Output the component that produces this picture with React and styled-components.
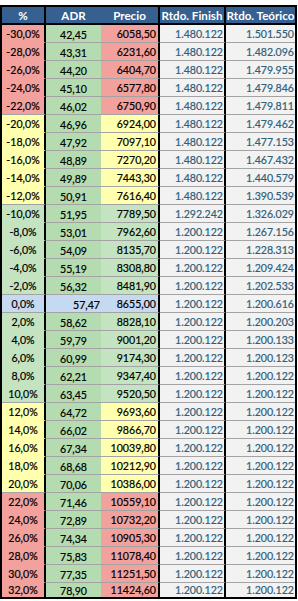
import React from 'react'
import styled, { createGlobalStyle } from 'styled-components'

//Palette
const tones = {
    red: '#F3A19D',
    yellow: '#FFFFAD',
    green: '#C4E4C1',
    blue: '#C5D9F1',
}

//Data
const rows = [
    ['-30,0%', '42,45', '6058,50', '1.480.122', '1.501.550', 'red'],
    ['-28,0%', '43,31', '6231,60', '1.480.122', '1.482.096', 'red'],
    ['-26,0%', '44,20', '6404,70', '1.480.122', '1.479.955', 'red'],
    ['-24,0%', '45,10', '6577,80', '1.480.122', '1.479.846', 'red'],
    ['-22,0%', '46,02', '6750,90', '1.480.122', '1.479.811', 'red'],
    ['-20,0%', '46,96', '6924,00', '1.480.122', '1.479.462', 'yellow'],
    ['-18,0%', '47,92', '7097,10', '1.480.122', '1.477.153', 'yellow'],
    ['-16,0%', '48,89', '7270,20', '1.480.122', '1.467.432', 'yellow'],
    ['-14,0%', '49,89', '7443,30', '1.480.122', '1.440.579', 'yellow'],
    ['-12,0%', '50,91', '7616,40', '1.480.122', '1.390.539', 'yellow'],
    ['-10,0%', '51,95', '7789,50', '1.292.242', '1.326.029', 'green'],
    ['-8,0%', '53,01', '7962,60', '1.200.122', '1.267.156', 'green'],
    ['-6,0%', '54,09', '8135,70', '1.200.122', '1.228.313', 'green'],
    ['-4,0%', '55,19', '8308,80', '1.200.122', '1.209.424', 'green'],
    ['-2,0%', '56,32', '8481,90', '1.200.122', '1.202.533', 'green'],
    ['0,0%', '57,47', '8655,00', '1.200.122', '1.200.616', 'blue'],
    ['2,0%', '58,62', '8828,10', '1.200.122', '1.200.203', 'green'],
    ['4,0%', '59,79', '9001,20', '1.200.122', '1.200.133', 'green'],
    ['6,0%', '60,99', '9174,30', '1.200.122', '1.200.123', 'green'],
    ['8,0%', '62,21', '9347,40', '1.200.122', '1.200.122', 'green'],
    ['10,0%', '63,45', '9520,50', '1.200.122', '1.200.122', 'green'],
    ['12,0%', '64,72', '9693,60', '1.200.122', '1.200.122', 'yellow'],
    ['14,0%', '66,02', '9866,70', '1.200.122', '1.200.122', 'yellow'],
    ['16,0%', '67,34', '10039,80', '1.200.122', '1.200.122', 'yellow'],
    ['18,0%', '68,68', '10212,90', '1.200.122', '1.200.122', 'yellow'],
    ['20,0%', '70,06', '10386,00', '1.200.122', '1.200.122', 'yellow'],
    ['22,0%', '71,46', '10559,10', '1.200.122', '1.200.122', 'red'],
    ['24,0%', '72,89', '10732,20', '1.200.122', '1.200.122', 'red'],
    ['26,0%', '74,34', '10905,30', '1.200.122', '1.200.122', 'red'],
    ['28,0%', '75,83', '11078,40', '1.200.122', '1.200.122', 'red'],
    ['30,0%', '77,35', '11251,50', '1.200.122', '1.200.122', 'red'],
    ['32,0%', '78,90', '11424,60', '1.200.122', '1.200.122', 'red'],
]

const headers = ['%', 'ADR', 'Precio', 'Rtdo. Finish', 'Rtdo. Teórico']

const App = () => {
    return (
        <>
            <GlobalStyle />
            <Table>
                {headers.map((label, i) => (
                    <HeadCell key={label} $divider={i !== 1 && i !== 4}>
                        {label}
                    </HeadCell>
                ))}
                {rows.map(([pct, adr, price, finish, teorico, tone], i) => {
                    const last = i === rows.length - 1
                    const next = rows[i + 1]
                    const edge = next && next[5] !== tone
                    const zero = tone === 'blue'
                    return (
                        <React.Fragment key={pct}>
                            <PctCell $tone={tone} $edge={edge} $last={last}>
                                {pct}
                            </PctCell>
                            <AdrCell $zero={zero} $last={last}>
                                {adr}
                            </AdrCell>
                            <PriceCell $tone={tone} $last={last}>
                                {price}
                            </PriceCell>
                            <ResultCell $divider $last={last}>
                                {finish}
                            </ResultCell>
                            <ResultCell $last={last}>{teorico}</ResultCell>
                        </React.Fragment>
                    )
                })}
            </Table>
        </>
    )
}

const GlobalStyle = createGlobalStyle`
    * {
        box-sizing: border-box;
    }
    body {
        margin: 0;
        background: #ffffff;
        font-family: Lato, "Liberation Sans", sans-serif;
    }
`

const Table = styled.div`
    display: grid;
    grid-template-columns: 44px 55px 59px 66px 69px;
    width: max-content;
    margin-top: 5px;
    border: 2px solid #000;
`

const HeadCell = styled.div`
    height: 18px;
    display: flex;
    align-items: center;
    justify-content: center;
    padding-top: 1px;
    background: #36608f;
    color: #ffffff;
    font-size: 11.6px;
    font-weight: 700;
    white-space: nowrap;
    border-bottom: 2px solid #000;
    border-right: ${(p) => (p.$divider ? '2px solid #000' : 'none')};
`

const Cell = styled.div`
    height: ${(p) => (p.$last ? '14px' : '18px')};
    display: flex;
    align-items: center;
    font-size: 10.6px;
    color: #000;
    -webkit-text-stroke: 0.2px currentColor;
    white-space: nowrap;
    border-bottom: ${(p) => (p.$last ? 'none' : '1px solid #a3a3a3')};
`

const PctCell = styled(Cell)`
    justify-content: center;
    background: ${(p) => tones[p.$tone]};
    border-right: 2px solid #000;
    border-bottom-color: ${(p) => (p.$edge ? '#a3a3a3' : tones[p.$tone])};
`

const AdrCell = styled(Cell)`
    justify-content: ${(p) => (p.$zero ? 'flex-end' : 'center')};
    padding-top: 2px;
    padding-right: ${(p) => (p.$zero ? '1px' : '0')};
    background: ${(p) => (p.$zero ? tones.blue : '#b5dcb0')};
`

const PriceCell = styled(Cell)`
    justify-content: flex-end;
    padding-right: 2px;
    background: ${(p) => tones[p.$tone]};
    border-right: 2px solid #000;
`

const ResultCell = styled(Cell)`
    justify-content: flex-end;
    padding-right: 1px;
    background: #f2f2f2;
    color: #2f6079;
    border-right: ${(p) => (p.$divider ? '2px solid #000' : 'none')};
`

export default App
